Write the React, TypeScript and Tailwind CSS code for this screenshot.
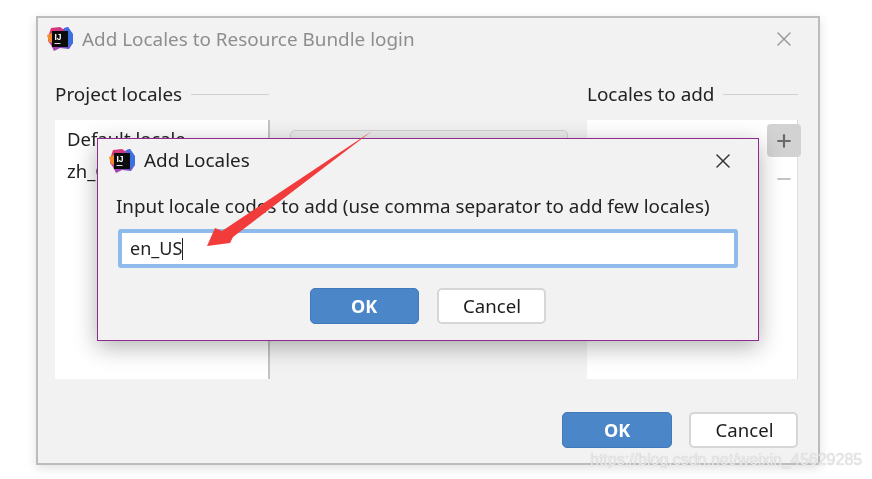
import { X, Plus, Minus } from "lucide-react";

function IdeaLogo({ id }: { id: string }) {
  return (
    <svg width="26" height="26" viewBox="0 0 26 26" className="shrink-0">
      <defs>
        <linearGradient id={id} x1="0" y1="0" x2="1" y2="1">
          <stop offset="0" stopColor="#e8365f" />
          <stop offset="0.55" stopColor="#b13bb0" />
          <stop offset="1" stopColor="#3f63e0" />
        </linearGradient>
      </defs>
      <path d="M4 2 L13 1 L16 3 L21 1 L25 8 L26 17 L22 23 L13 22 L7 25 L4 19 L1 15 L2 8 Z" fill={`url(#${id})`} />
      <path d="M0 9 L5 7 L6 17 L2 16 Z" fill="#f28a2e" />
      <path d="M17 2 L21 1 L26 8 L26 17 L21 21 Z" fill="#3c6fe0" />
      <rect x="5" y="5" width="16" height="16" fill="#0c0c0c" />
      <text x="7.5" y="13.5" fontSize="8.5" fontWeight="700" fill="#fff" fontFamily="Liberation Sans, sans-serif">IJ</text>
      <rect x="7.5" y="17" width="6" height="1" fill="#dddddd" />
    </svg>
  );
}

function DialogButton({ label, primary, className }: { label: string; primary?: boolean; className: string }) {
  return (
    <button
      className={
        primary
          ? `h-[36px] rounded-[5px] bg-[#4a86c8] border border-[#4279b8] text-white font-bold text-[18px] ${className}`
          : `h-[36px] rounded-[5px] bg-white border-2 border-[#d6d6d6] text-[#1c1c1c] text-[18.6px] pl-[2px] ${className}`
      }
    >
      {label}
    </button>
  );
}

function SectionLabel({ label, lineWidth }: { label: string; lineWidth: string }) {
  return (
    <div className="flex items-center gap-[9px] h-5">
      <span className="text-[18.9px] text-[#222] leading-none whitespace-nowrap">{label}</span>
      <div className={`h-px bg-[#d0d0d0] ${lineWidth}`} />
    </div>
  );
}

export default function App() {
  return (
    <div className="relative w-[872px] h-[479px] overflow-hidden bg-white font-['Noto_Sans','Open_Sans',sans-serif] blur-[0.5px]">
      <div className="ml-9 mt-4 w-[784px] h-[449px] bg-[#f2f2f2] border-2 border-[#bcbcbc] shadow-[0_3px_10px_rgba(0,0,0,0.12)] flex flex-col">
        {/* title bar */}
        <div className="flex items-center h-[42px] pl-[9px] pr-[22px]">
          <IdeaLogo id="logo-outer" />
          <span className="ml-[9px] text-[18.9px] text-[#8e8e8e] leading-none">Add Locales to Resource Bundle login</span>
          <X className="ml-auto text-[#9a9a9a]" size={24} strokeWidth={1.5} />
        </div>

        {/* lists */}
        <div className="flex pl-[17px] pt-[24px]">
          <div className="w-[215px]">
            <SectionLabel label="Project locales" lineWidth="w-[78px]" />
            <div className="mt-[16px] h-[259px] bg-white border-r-2 border-[#c4c4c4] pl-3 pt-[3px] text-[18.5px] text-[#222] leading-[32px]">
              <div>Default locale</div>
              <div>zh_CN</div>
            </div>
          </div>
          <div className="ml-5 w-[278px] pt-[46px]">
            <div className="h-[40px] rounded-t-[5px] bg-[#ebebeb] border border-[#d2d2d2]" />
          </div>
          <div className="ml-[19px] w-[211px]">
            <SectionLabel label="Locales to add" lineWidth="w-[78px]" />
            <div className="mt-[16px] h-[259px] bg-white border-r border-[#dedede]" />
          </div>
        </div>

        {/* footer */}
        <div className="flex justify-end gap-[17px] pr-[20px] mt-[33px]">
          <DialogButton label="OK" primary className="w-[110px]" />
          <DialogButton label="Cancel" className="w-[109px]" />
        </div>
      </div>

      {/* add / remove toolbar */}
      <div className="absolute left-[767px] top-[124px] w-[34px] flex flex-col items-center">
        <div className="w-[34px] h-[33px] rounded-[4px] bg-[#d2d2d2] flex items-center justify-center">
          <Plus className="text-[#6a6a6a]" size={20} strokeWidth={2.6} />
        </div>
        <Minus className="mt-[12px] text-[#c4c4c4]" size={20} strokeWidth={2.6} />
      </div>

      {/* nested dialog */}
      <div className="absolute left-[97px] top-[138px] w-[662px] h-[203px] bg-[#f2f2f2] border border-[#8f2b8f] shadow-[0_6px_22px_rgba(0,0,0,0.3)] flex flex-col">
        <div className="flex items-center h-[43px] pl-[11px] pr-[23px]">
          <IdeaLogo id="logo-inner" />
          <span className="ml-[9px] text-[18.9px] text-[#222] leading-none">Add Locales</span>
          <X className="ml-auto text-[#333]" size={24} strokeWidth={1.5} />
        </div>
        <div className="pl-[18px] mt-[12px] text-[18.8px] text-[#222] leading-6 whitespace-nowrap">
          Input locale codes to add (use comma separator to add few locales)
        </div>
        <div className="ml-[20px] mt-[11px] w-[620px] h-[39px] bg-white border-4 border-[#8fbbec] rounded-[3px] flex items-center pl-2 text-[18px] text-[#222]">
          en_US<span className="w-px h-[22px] bg-[#222]" />
        </div>
        <div className="flex justify-center gap-[18px] mt-[20px] pr-[1px]">
          <DialogButton label="OK" primary className="w-[109px]" />
          <DialogButton label="Cancel" className="w-[109px]" />
        </div>
      </div>

      {/* annotation arrow */}
      <svg className="absolute left-0 top-0" width="872" height="479">
        <polygon points="372,131 233,237 230,243 207,246 215,228 222,231" fill="#f23c3c" />
      </svg>

      {/* watermark */}
      <div className="absolute left-[590px] top-[450px] text-[16px] leading-5 text-[#e8e8e8] font-['Liberation_Sans',sans-serif] whitespace-nowrap [text-shadow:0_0_1px_#bdbdbd]">
        https://blog.csdn.net/weixin_45629285
      </div>
    </div>
  );
}
